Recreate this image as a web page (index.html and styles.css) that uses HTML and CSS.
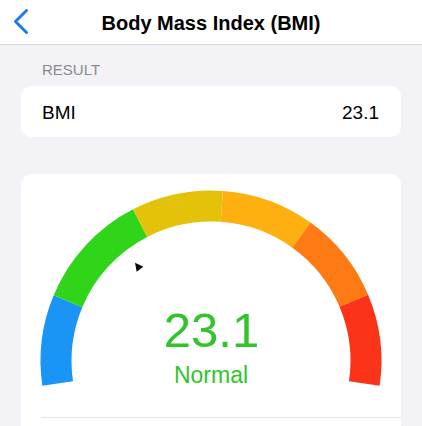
FILE: index.html
```html
<!DOCTYPE html>
<html>
<head>
<meta charset="utf-8">
<link rel="stylesheet" href="styles.css">
</head>
<body>
<header class="nav">
  <svg class="back" width="30" height="44" viewBox="0 0 30 44">
    <polyline points="26.5,10.5 15.5,21.5 26.5,32.5" fill="none" stroke="#1a7cf0" stroke-width="3" stroke-linecap="round" stroke-linejoin="round"/>
  </svg>
  <h1 class="title">Body Mass Index (BMI)</h1>
</header>
<div class="section-label">RESULT</div>
<div class="card row">
  <span>BMI</span>
  <span>23.1</span>
</div>
<div class="card gauge-card">
  <div class="gauge">
    <svg class="arc" width="380" height="230" viewBox="0 0 380 230">
      <g fill="none" stroke-width="31">
        <path d="M36.7 209.6 A155 155 0 0 1 47.0 127.2" stroke="#1a94f5"/>
        <path d="M47.0 127.2 A155 155 0 0 1 119.1 49.1" stroke="#30d51a"/>
        <path d="M119.1 49.1 A155 155 0 0 1 200.8 32.4" stroke="#e5c20a"/>
        <path d="M200.8 32.4 A155 155 0 0 1 280.4 61.1" stroke="#fdb00f"/>
        <path d="M280.4 61.1 A155 155 0 0 1 332.8 126.7" stroke="#fd7a14"/>
        <path d="M332.8 126.7 A155 155 0 0 1 343.3 209.6" stroke="#fb3319"/>
      </g>
      <polygon points="114,88.7 122.3,92.7 115.7,97.7" fill="#000"/>
    </svg>
    <div class="readout">
      <div class="value">23.1</div>
      <div class="category">Normal</div>
    </div>
  </div>
  <div class="divider"></div>
  <div class="below"></div>
</div>
</body>
</html>
```
FILE: styles.css
```css
html, body {
  margin: 0;
  padding: 0;
}
body {
  width: 422px;
  height: 426px;
  overflow: hidden;
  background: #f2f2f7;
  font-family: "Liberation Sans", Arial, sans-serif;
  color: #000;
}
.nav {
  position: relative;
  height: 44px;
  background: #fff;
  border-bottom: 1px solid #d6d6da;
  display: flex;
  align-items: center;
  justify-content: center;
}
.back {
  position: absolute;
  left: 0;
  top: 0;
}
.title {
  margin: 0;
  font-size: 20px;
  font-weight: bold;
  line-height: 44px;
  padding-top: 1px;
}
.section-label {
  padding: 16px 0 0 42px;
  font-size: 15px;
  line-height: 18px;
  color: #8a8a8e;
}
.card {
  margin: 7px 21px 0 21px;
  background: #fff;
  border-radius: 10px;
}
.row {
  height: 51px;
  box-sizing: border-box;
  padding: 2px 22px 0 21px;
  display: flex;
  align-items: center;
  justify-content: space-between;
  font-size: 19px;
}
.gauge-card {
  margin-top: 37px;
  overflow: hidden;
}
.gauge {
  display: grid;
}
.arc {
  grid-area: 1 / 1;
  display: block;
}
.readout {
  grid-area: 1 / 1;
  padding-top: 131.5px;
  text-align: center;
  color: #33c42b;
}
.value {
  font-size: 49px;
  line-height: 49px;
  padding-left: 1px;
}
.category {
  margin-top: 9px;
  font-size: 23px;
  line-height: 23px;
}
.divider {
  margin: 13px 0 0 20px;
  height: 1px;
  background: #e2e2e6;
}
.below {
  height: 50px;
}
```
